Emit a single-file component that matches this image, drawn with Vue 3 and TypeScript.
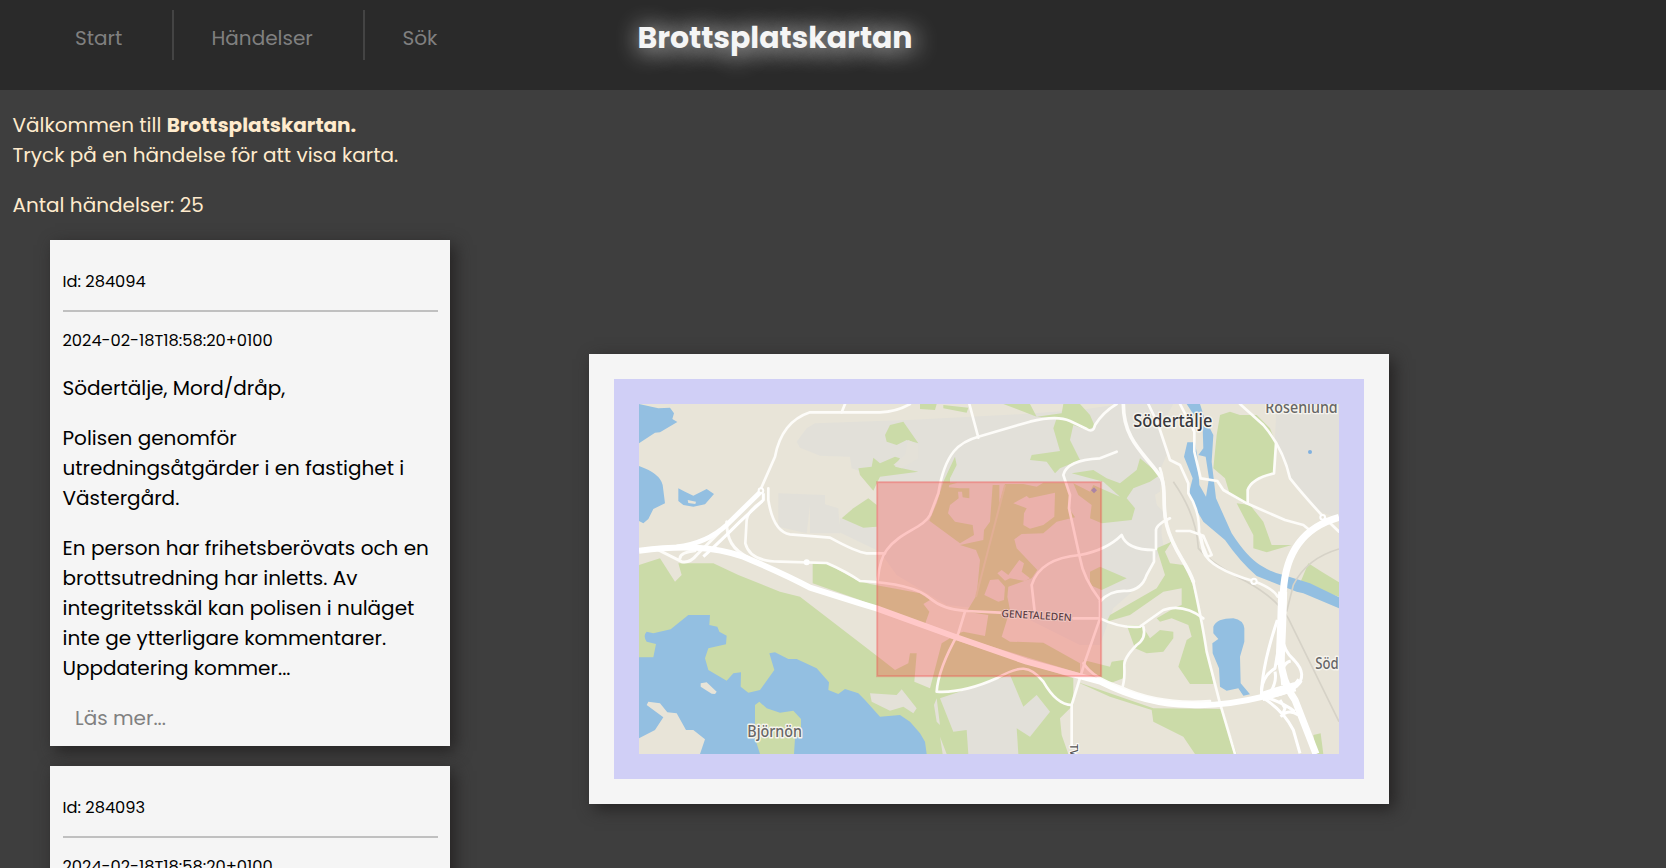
<script setup lang="ts">
interface Incident { id: number; time: string; place: string; summary: string; details: string }

const place = 'Södertälje, Mord/dråp,'
const summary = 'Polisen genomför utredningsåtgärder i en fastighet i Västergård.'
const details =
  'En person har frihetsberövats och en brottsutredning har inletts. Av integritetsskäl kan polisen i nuläget inte ge ytterligare kommentarer. Uppdatering kommer...'

const incidents: Incident[] = [
  { id: 284094, time: '2024-02-18T18:58:20+0100', place, summary, details },
  { id: 284093, time: '2024-02-18T18:58:20+0100', place, summary, details },
]

const urban: string[] = [
  'M650 290L680 250L705 235L1000 224L1330 207L1500 195L1620 177L1780 177L1740 250L1760 330L1720 420L1750 600L1690 710L1600 790L1560 900L1500 900L1300 800L1100 780L950 690L900 620L775 560L780 520L880 550L900 400L815 370L810 335L720 332L660 308Z',
  'M595 445L735 450L735 478L775 490L780 565L690 565L690 480L680 565L595 545Z',
  'M2090 177H2277V520L2220 500L2130 400L2085 280Z',
  'M1590 230L1640 240L1700 340L1745 400L1740 440L1690 470L1600 540Z',
  'M1080 1060L1290 990L1330 1085L1370 1050L1410 1100L1350 1175L1310 1150L1315 1227H1165L1155 1170L1120 1160Z',
  'M1590 470L1700 450L1750 500L1740 600L1700 700L1600 750Z',
]
const green: string[] = [
  'M177 660L240 640L285 710L305 690L295 655L400 655L475 690L600 740L660 755L900 940L945 975L985 955L990 925L1010 925L1003 1010L1050 1030L1085 895L1110 880L1480 1000L1480 1080L1440 1120L1445 1170L1465 1227H1315L1310 1150L1350 1175L1410 1100L1370 1050L1330 1085L1290 990L1080 1060L1120 1160L1160 1155L1165 1227H177Z',
  'M698 655L740 655L830 705L870 717L1020 745L1050 765L1030 777L1048 800L1035 837L890 785L840 765L698 715Z',
  'M1090 410L1125 335L1130 360L1110 400V413H1132L1108 420L1106 427L1140 430H1168V460L1148 457L1146 440H1134L1136 460L1110 480L1104 505L1125 530L1178 540L1182 570L1140 595L1048 527L1070 475Z',
  'M1238 420H1258V475L1275 417H1330L1370 425L1390 413H1460L1470 445L1467 490L1485 517L1430 530L1390 565L1325 567L1303 583L1310 610L1372 675L1355 700L1285 725L1282 755L1290 795L1265 875L1290 890L1390 893L1500 955V985L1120 870L1150 860L1215 873L1225 810L1160 800L1190 750L1200 645L1188 615L1140 600L1210 585L1212 555L1230 530Z',
  'M1480 415L1530 440L1540 420L1620 455L1570 410L1475 385L1540 375L1580 400L1620 415L1670 375L1680 340L1740 390L1710 410L1660 430L1640 460L1665 490L1655 525L1565 535L1530 520L1535 480L1495 450Z',
  'M1270 177H1350L1370 215L1445 205L1450 177H1500L1530 210L1545 245L1520 255L1480 240L1470 285L1500 345L1440 370L1425 385L1400 350L1350 345L1355 330L1440 318L1420 250L1430 220L1370 215Z',
  'M915 270L930 240L970 230L1015 295L980 285L950 300L920 290Z',
  'M1020 177H1070L1065 195L1020 192ZM1090 180L1165 188L1160 203L1090 190Z',
  'M835 370L875 365L880 338L900 355L945 335L960 340L945 365L1015 380L900 395L880 437L840 390Z',
  'M785 520L820 490L865 460L890 480V545L850 548Z',
  'M1530 680L1560 665L1640 700L1565 735L1530 720Z',
  'M1920 210L1950 200L1980 210H2030L2070 250L2090 300L2080 385L2010 415L2000 480L1950 450L1935 400L1900 370L1910 270Z',
  'M1970 475L2010 480L2050 530L2075 600L2135 600L2060 622L2020 610V570Z',
  'M2185 655L2225 680L2277 712V755L2160 715Z',
  'M1730 610L1775 590L1755 620L1770 655L1810 660L1835 710L1865 820L1900 1017H1830L1795 965L1820 885L1835 875L1825 840L1775 820L1740 830L1730 820L1790 785L1805 780V730L1750 740L1650 810L1580 830L1590 810L1730 730L1755 690Z',
  'M1640 840L1685 840L1710 880L1740 855L1780 860V880L1750 920L1700 925L1665 910Z',
  'M1510 945L1590 965L1595 950L1630 945V1000L1590 1015L1540 990Z',
  'M1490 1010L1720 1090L1925 1092L1970 1227H1845L1810 1175L1720 1130L1715 1095L1590 1055Z',
  'M2200 1170L2222 1165L2230 1227H2210Z',
]
const clearings: string[] = [
  'M1300 475L1340 453L1348 460L1425 443L1423 515L1390 540L1350 551L1330 540L1332 505L1340 490Z',
  'M1252 685L1265 675L1285 690L1318 645L1332 655L1325 680L1350 700L1335 708L1290 700L1275 707Z',
  'M1213 750L1230 705L1255 703L1275 725L1272 765L1255 770Z',
  'M870 1045L950 1050L965 1033L1010 1090L1000 1105L970 1085L930 1097L875 1070Z',
  'M940 360L975 330L985 285L1015 300L1015 340L965 370Z',
  'M1070 1060L1080 1140L1070 1130L1062 1080ZM1080 1175L1100 1227H1088Z',
]
const islands: string[] = [
  'M177 1180L225 1155L250 1117L200 1080L205 1070L240 1075L262 1102L290 1105L318 1155H340L375 1183L360 1227H177Z',
  'M362 1015L380 1012L410 1040L405 1047L395 1046L362 1025Z',
  'M323 465L348 470L346 477L325 474Z',
]
const water: string[] = [
  'M177 177L235 190L270 188L282 205L277 222L292 231L240 262L225 263L177 295Z',
  'M177 363Q240 385 248 420L255 475L220 492L205 522L190 535L177 528Z',
  'M295 430L315 440L340 452L380 432L402 447L375 478L340 485L310 480L295 468Z',
  'M177 937H220L228 897L200 890Q188 872 200 860L220 865L272 853L325 810H390L388 840L412 845L418 860L440 872L438 898L385 910L375 940L385 975L440 1007L460 985L483 982L482 1025L505 1043L540 1035L583 975L568 925L585 922L625 942H650L710 970L747 1012L745 1035L775 1047L795 1032L835 1045L855 1065L900 1115L960 1110L990 1130L1020 1165L1035 1190L1040 1227H177Z',
  'M1820 177H1860L1872 215L1900 270L1895 350L1908 460L1955 565Q2000 635 2040 660Q2080 685 2110 690L2190 715L2277 757V790L2170 745L2150 740L2030 693Q1980 650 1935 585L1870 530L1835 470L1828 440L1838 400L1812 335L1822 292H1845L1852 335L1858 420L1878 455L1887 400L1877 335L1855 330L1870 310L1868 250Z',
  'M1900 845Q1910 820 1960 820Q1990 825 1993 850V890L1980 935L1982 1015L2010 1048L1990 1052L1975 1030L1940 1037L1920 1025L1917 970L1898 925L1897 895L1915 882L1900 865Z',
]
const roads: string[] = [
  'M540 437L585 335Q605 230 690 202L900 202Q950 200 990 177',
  'M795 177L785 202',
  'M1168 177L1195 278',
  'M893 705Q900 640 920 615C960 560 1030 550 1050 510L1075 445C1095 320 1140 290 1195 275L1350 230Q1430 210 1470 228L1520 252Q1540 265 1545 240Q1570 200 1610 177',
  'M1610 320L1560 340Q1460 345 1450 390L1470 450L1467 490L1500 640Q1510 700 1560 765V820L1515 950L1475 1080V1200',
  'M565 430V465Q580 560 630 568L750 578Q830 622 860 625H915',
  'M545 470Q505 495 500 525L496 595Q510 650 600 650L740 654Q800 680 840 708Q1000 715 1050 760Q1090 795 1160 798L1260 803',
  'M1364 800L1355 720Q1380 640 1500 630Q1580 615 1625 570Q1640 615 1722 615V650L1700 690Q1685 735 1640 738Q1590 735 1560 770',
  'M1480 820H1560Q1620 850 1680 845Q1700 830 1750 795Q1810 775 1870 820',
  'M1155 800L1135 865Q1075 970 1070 1040Q1150 1045 1250 1000C1320 960 1350 960 1390 1010Q1430 1080 1475 1080',
  'M1690 845Q1700 880 1670 900Q1630 940 1633 965Q1635 1000 1628 1025',
  'M1510 955Q1540 1000 1620 1025Q1740 1080 1890 1068',
  'M1740 370C1760 420 1745 480 1760 540C1780 620 1820 650 1840 710Q1870 850 1880 920L1920 1075L1965 1227',
  'M1705 177L1735 240L1770 345L1800 360L1825 415V445Q1860 500 1857 560L1870 620Q1890 670 2020 708Q2080 730 2093 755',
  'M1800 177L1825 225L1843 260V320L1862 400L1912 408L1930 435L2000 475L2115 525L2170 540L2195 560',
  'M1980 177L2050 240Q2110 310 2130 400Q2170 450 2225 510L2277 560',
  'M2088 295L2082 385Q2015 400 2003 435V475',
  'M1770 520Q1725 540 1728 560V612',
  'M1790 558H1830L1870 572L1895 630L1882 635L1868 600L1862 570',
]
const slipRoads: string[] = [
  'M440 530C440 580 455 615 510 640',
  'M235 615L305 650Q330 655 350 630L420 560M300 640Q300 622 345 617',
]
const junction: string[] = [
  'M112 60Q65 200 64 290Q130 330 160 390L180 460',
  'M118 130L105 205Q70 225 64 270M105 215Q112 250 85 285',
  'M126 110Q132 155 162 180Q205 225 168 260',
  'M128 255Q120 190 152 183',
  'M65 288Q125 305 165 335M125 350L135 325L120 300M122 350Q145 325 175 345',
]
</script>

<template>
  <div class="page">
    <header class="top">
      <nav class="menu">
        <a class="item start">Start</a>
        <a class="item events">Händelser</a>
        <a class="item search">Sök</a>
      </nav>
      <h1 class="brand">Brottsplatskartan</h1>
    </header>

    <main class="content">
      <section class="feed">
        <p class="intro">
          Välkommen till <b>Brottsplatskartan.</b><br />
          Tryck på en händelse för att visa karta.
        </p>
        <p class="intro">Antal händelser: 25</p>
        <article v-for="item in incidents" :key="item.id" class="card">
          <p class="meta">Id: {{ item.id }}</p>
          <hr class="rule" />
          <p class="meta time">{{ item.time }}</p>
          <p class="text">{{ item.place }}</p>
          <p class="text">{{ item.summary }}</p>
          <p class="text">{{ item.details }}</p>
          <a class="more">Läs mer...</a>
        </article>
      </section>

      <section class="map-card">
        <div class="map-frame">
          <svg class="map" viewBox="177 177 2100 1050" preserveAspectRatio="none">
            <rect x="177" y="177" width="2100" height="1050" fill="#e8e4d8" />
            <path v-for="(d, i) in urban" :key="'u' + i" :d="d" fill="#e2e0d9" />
            <path v-for="(d, i) in green" :key="'g' + i" :d="d" fill="#cbdba8" />
            <path v-for="(d, i) in clearings" :key="'c' + i" :d="d" fill="#e4e1d8" />
            <path v-for="(d, i) in water" :key="'w' + i" :d="d" fill="#93bfe1" />
            <path v-for="(d, i) in islands" :key="'i' + i" :d="d" fill="#e8e4d8" />
            <path d="M525 1080L538 1070L560 1090L600 1103L640 1097L663 1122V1170L645 1180L642 1227H540L525 1180Z" fill="#cbdba8" />
            <g fill="none" stroke="#d6d2c7" stroke-width="5">
              <path d="M1780 410Q1850 510 1855 610Q1900 660 2000 710Q2090 760 2125 820L2277 1130" />
              <path d="M2277 612Q2180 640 2140 720L2120 800" />
            </g>
            <path d="M1188 755L1275 420" stroke="#d8ddbb" stroke-width="6" fill="none" />
            <g fill="none" stroke="#fdfcf9" stroke-linejoin="round" stroke-linecap="round">
              <path v-for="(d, i) in roads" :key="'r' + i" :d="d" stroke-width="8" />
              <path v-for="(d, i) in slipRoads" :key="'s' + i" :d="d" stroke-width="9" />
              <path d="M1630 177C1630 290 1700 330 1745 400C1760 440 1745 480 1760 540C1780 620 1820 650 1840 710" stroke-width="11" />
            </g>
            <g fill="none" stroke="#fff" stroke-linejoin="round">
              <path d="M545 437L440 540Q380 595 290 606" stroke-width="15" />
              <path d="M550 445V465L480 530Q420 590 370 635" stroke-width="9" />
              <path d="M177 617C310 600 400 605 490 635Q620 690 690 728L840 775L890 790L1110 870L1340 950L1560 1010Q1700 1080 1830 1080Q1930 1085 2050 1055Q2140 1040 2160 1005" stroke-width="18" />
              <path d="M2277 517Q2120 560 2110 740L2101 930Q2105 1010 2145 1065L2208 1227" stroke-width="21" />
              <path d="M2108 740L2105 840L2100 960" stroke-width="27" />
              <path d="M2045 1055Q2090 1040 2145 1025" stroke-width="28" />
              <g transform="translate(1980 765)" stroke-width="9">
                <path v-for="(d, i) in junction" :key="'j' + i" :d="d" />
              </g>
            </g>
            <g fill="#e8e4d8" stroke="#fff" stroke-width="6">
              <circle cx="543" cy="437" r="7" />
              <circle cx="2022" cy="709" r="8" />
              <circle cx="2228" cy="517" r="7" />
            </g>
            <circle cx="680" cy="652" r="9" fill="#fff" />
            <circle cx="2190" cy="321" r="6" fill="#7fb0df" />
            <path d="M1542 427L1551 436L1542 445L1533 436Z" fill="#8fa5cf" />
            <rect x="891.5" y="411.5" width="672" height="582" fill="#ff2323" fill-opacity=".25" stroke="#f04848" stroke-opacity=".35" stroke-width="6" />
            <g class="labels">
              <text class="city" x="1660" y="245" font-size="52" textLength="237" lengthAdjust="spacingAndGlyphs" stroke-width="9">Södertälje</text>
              <text x="2056" y="204" font-size="46" textLength="217" lengthAdjust="spacingAndGlyphs" stroke-width="8">Rosenlund</text>
              <text x="502" y="1177" font-size="47" textLength="164" lengthAdjust="spacingAndGlyphs" stroke-width="9">Björnön</text>
              <text x="2206" y="971" font-size="47" stroke-width="9" textLength="70" lengthAdjust="spacingAndGlyphs">Söd</text>
              <text class="street" transform="translate(1264 816) rotate(3.4)" font-size="31" textLength="211" stroke-width="5">GENETALEDEN</text>
              <text class="street side" transform="translate(1469 1197) rotate(90)" font-size="31" stroke-width="6">TV</text>
            </g>
          </svg>
        </div>
      </section>
    </main>
  </div>
</template>

<style>
html, body { margin: 0; overflow: hidden; background: #3e3e3e; }
</style>

<style scoped>
.page {
  height: 868px;
  overflow: hidden;
  background: #3e3e3e;
  font-family: Poppins, Inter, "Open Sans", sans-serif;
  font-size: 20px;
  line-height: 30px;
  color: #000;
}
p, h1 { margin: 0; }
.top {
  display: flex;
  height: 90px;
  background: #2a2a2a;
}
.menu {
  display: flex;
  width: 637.5px;
  height: 50px;
  margin-top: 10px;
  box-sizing: border-box;
}
.item {
  box-sizing: border-box;
  padding-top: 13px;
  color: #808080;
  white-space: nowrap;
}
.start { width: 174px; padding-left: 75px; border-right: 2px solid #444; }
.events { width: 191px; padding-left: 37.5px; border-right: 2px solid #444; }
.search { padding-left: 37.5px; }
.brand {
  margin-top: 15px;
  font-size: 30px;
  line-height: 45px;
  font-weight: 700;
  letter-spacing: -0.05px;
  color: #f5f5f5;
  text-shadow: 2px 2px 25px #f5f5f5;
  white-space: nowrap;
}
.content {
  display: flex;
  align-items: flex-start;
}
.feed { width: 450px; padding-top: 20px; margin-right: 139px; flex: none; }
.intro { padding-left: 12.5px; color: #ffebcd; margin-bottom: 20px; }
.card {
  box-sizing: border-box;
  width: 400px;
  height: 506px;
  margin: 0 0 20px 50px;
  padding: 30px 12.5px 0;
  background: #f5f5f5;
  box-shadow: 5px 5px 15px #252323;
}
.meta { font-size: 16.25px; line-height: 24px; }
.rule {
  height: 2px;
  margin: 16px 0 17px;
  border: 0;
  background: #c0c0c0;
}
.time { margin-bottom: 20px; }
.text { margin-bottom: 20px; }
.more { display: block; margin-left: 12.5px; color: #808080; }
.map-card {
  margin-top: 264px;
  padding: 25px;
  background: #f5f5f5;
  box-shadow: 5px 5px 15px #252323;
}
.map-frame { padding: 25px; background: #d0cff6; }
.map { display: block; width: 700px; height: 350px; }
.labels text {
  font-family: "Noto Sans", sans-serif;
  font-weight: 500;
  fill: #666;
  stroke: #f6f4ee;
  stroke-linejoin: round;
  paint-order: stroke;
}
.labels .city { fill: #38383c; }
.labels .street { fill: #5a3c42; stroke: #f3c9c4; }
.labels .side { fill: #555; stroke: #fff; }
</style>
